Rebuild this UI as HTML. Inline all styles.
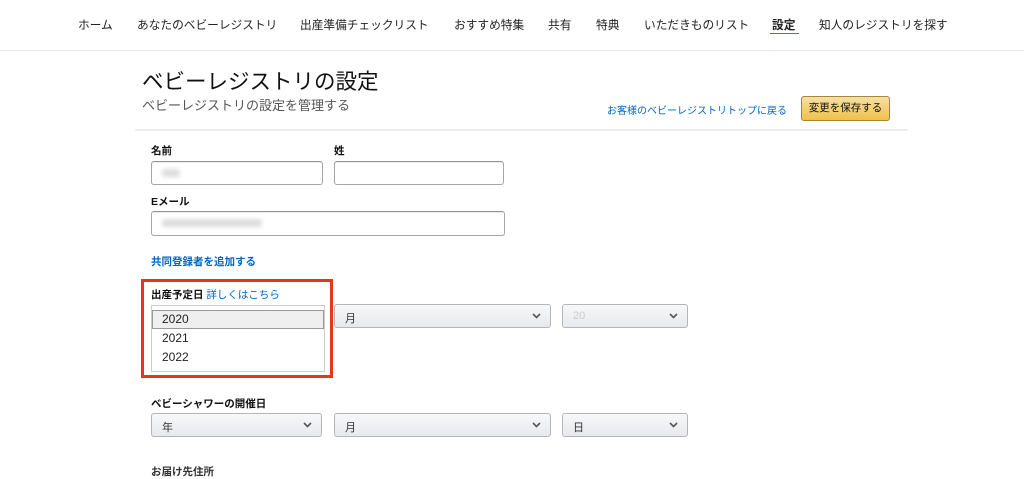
<!DOCTYPE html>
<html><head><meta charset="utf-8"><style>
*{margin:0;padding:0;box-sizing:border-box}
body{width:1024px;height:469px;overflow:hidden;background:#fff;position:relative;font-family:"Liberation Sans","Noto Sans CJK JP",sans-serif;color:#111}
.a{position:absolute;white-space:nowrap}
.nav{font-size:11.7px;top:16px;color:#222}
.lbl{font-size:10.5px;font-weight:bold}
.inp{position:absolute;border:1px solid #a6a6a6;border-top-color:#949494;border-radius:3px;background:#fff;box-shadow:inset 0 1px 0 rgba(0,0,0,.07)}
.sel{position:absolute;border:1px solid #b5b5b5;border-radius:3px;background:linear-gradient(#f7f8fa,#e7e9ec);font-size:11px;color:#333;padding:5px 10px;height:24px}
.sel svg{position:absolute;right:9px;top:8px}
.blur{position:absolute;background:#ddd;filter:blur(2px);border-radius:3px}
</style></head><body>
<div class="a nav" style="left:78px">ホーム</div>
<div class="a nav" style="left:137px">あなたのベビーレジストリ</div>
<div class="a nav" style="left:300px">出産準備チェックリスト</div>
<div class="a nav" style="left:454px">おすすめ特集</div>
<div class="a nav" style="left:548px">共有</div>
<div class="a nav" style="left:596px">特典</div>
<div class="a nav" style="left:644px">いただきものリスト</div>
<div class="a nav" style="left:772px;font-weight:bold">設定</div>
<div class="a" style="left:770px;top:33px;width:29px;height:1px;background:#c45500"></div>
<div class="a nav" style="left:819px">知人のレジストリを探す</div>
<div class="a" style="left:0;top:50px;width:1024px;height:1px;background:#e7e7e7"></div>

<div class="a" style="left:142px;top:65px;font-size:21.5px;color:#111">ベビーレジストリの設定</div>
<div class="a" style="left:142px;top:95px;font-size:13px;color:#555">ベビーレジストリの設定を管理する</div>
<div class="a" style="left:607px;top:102px;font-size:10px;color:#0066c0">お客様のベビーレジストリトップに戻る</div>
<div class="a" style="left:801px;top:96px;width:89px;height:25px;border:1px solid #a88734;border-radius:3px;background:linear-gradient(#f7dfa5,#f0c14b);font-size:10.5px;text-align:center;line-height:23px">変更を保存する</div>
<div class="a" style="left:135px;top:129px;width:773px;height:2px;background:#eee"></div>

<div class="a lbl" style="left:151px;top:143px">名前</div>
<div class="a lbl" style="left:334px;top:143px">姓</div>
<div class="inp" style="left:151px;top:161px;width:172px;height:24px"></div>
<div class="blur" style="left:162px;top:169px;width:18px;height:8px"></div>
<div class="inp" style="left:334px;top:161px;width:170px;height:24px"></div>
<div class="a lbl" style="left:151px;top:194px">Eメール</div>
<div class="inp" style="left:151px;top:211px;width:354px;height:25px"></div>
<div class="blur" style="left:162px;top:219px;width:100px;height:8px"></div>
<div class="a lbl" style="left:151px;top:254px;color:#0066c0">共同登録者を追加する</div>

<div class="sel" style="left:334px;top:304px;width:217px">月<svg width="9" height="6" viewBox="0 0 9 6"><path d="M1 1l3.5 3.5L8 1" stroke="#555" stroke-width="1.6" fill="none"/></svg></div>
<div class="sel" style="left:562px;top:304px;width:126px"><span style="color:#ccc">20</span><svg width="9" height="6" viewBox="0 0 9 6"><path d="M1 1l3.5 3.5L8 1" stroke="#555" stroke-width="1.6" fill="none"/></svg></div>

<div class="a" style="left:141px;top:279px;width:192px;height:99px;border:3px solid #e8361e;background:#fff"></div>
<div class="a lbl" style="left:151px;top:287px">出産予定日 <span style="color:#0066c0;font-weight:normal">詳しくはこちら</span></div>
<div class="a" style="left:151px;top:305px;width:174px;height:67px;border:1px solid #ccc;background:#fff"></div>
<div class="a" style="left:152px;top:310px;width:172px;height:19px;background:#efefef;border:1px solid #999"></div>
<div class="a" style="left:162px;top:312px;font-size:12px;color:#222">2020</div>
<div class="a" style="left:162px;top:331px;font-size:12px;color:#222">2021</div>
<div class="a" style="left:162px;top:350px;font-size:12px;color:#222">2022</div>

<div class="a lbl" style="left:151px;top:396px">ベビーシャワーの開催日</div>
<div class="sel" style="left:151px;top:413px;width:171px">年<svg width="9" height="6" viewBox="0 0 9 6"><path d="M1 1l3.5 3.5L8 1" stroke="#555" stroke-width="1.6" fill="none"/></svg></div>
<div class="sel" style="left:334px;top:413px;width:217px">月<svg width="9" height="6" viewBox="0 0 9 6"><path d="M1 1l3.5 3.5L8 1" stroke="#555" stroke-width="1.6" fill="none"/></svg></div>
<div class="sel" style="left:562px;top:413px;width:126px">日<svg width="9" height="6" viewBox="0 0 9 6"><path d="M1 1l3.5 3.5L8 1" stroke="#555" stroke-width="1.6" fill="none"/></svg></div>
<div class="a lbl" style="left:151px;top:464px;color:#333">お届け先住所</div>
</body></html>
